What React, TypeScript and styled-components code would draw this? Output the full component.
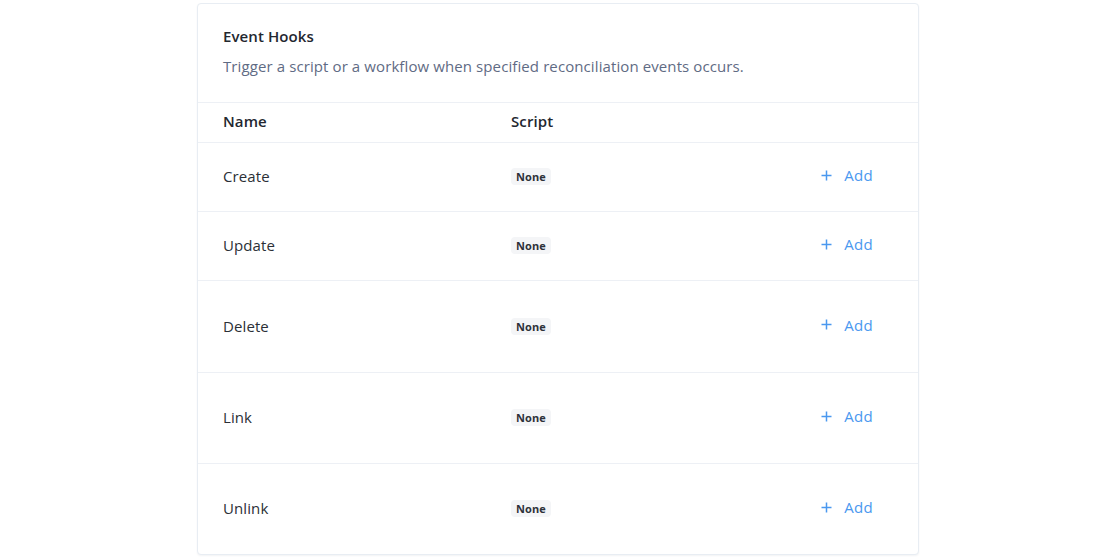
import React from "react";
import styled, { createGlobalStyle } from "styled-components";

const Global = createGlobalStyle`
  html, body { margin: 0; padding: 0; background: #ffffff; }
  body { font-family: "Open Sans", "Noto Sans", sans-serif; -webkit-font-smoothing: antialiased; }
`;

const Page = styled.div`
  width: 1120px;
  height: 560px;
  display: flex;
  justify-content: center;
  padding-top: 3px;
  box-sizing: border-box;
`;

const Card = styled.div`
  width: 722px;
  height: 552px;
  box-sizing: border-box;
  border: 1px solid #e8edf3;
  border-radius: 4px;
  box-shadow: 0 1px 2px rgba(30, 50, 90, 0.06);
  background: #fff;
  display: flex;
  flex-direction: column;
  overflow: hidden;
  margin-left: -4px;
  letter-spacing: 0.1px;
`;

const Header = styled.div`
  height: 99px;
  flex-shrink: 0;
  box-sizing: border-box;
  padding: 22px 25px 0;
  border-bottom: 1px solid #edf0f5;
`;

const Title = styled.div`
  font-size: 15px;
  font-weight: 600;
  color: #23272f;
  line-height: 20px;
`;

const Subtitle = styled.div`
  margin-top: 10px;
  font-size: 15px;
  color: #5f6b84;
  line-height: 20px;
`;

const Row = styled.div<{ $h: number; $head?: boolean }>`
  height: ${(p) => p.$h}px;
  flex-shrink: 0;
  box-sizing: border-box;
  display: grid;
  grid-template-columns: 288px 1fr auto;
  align-items: center;
  padding: ${(p) => (p.$head ? "0 45px 4px 25px" : "0 45px 2px 25px")};
  border-bottom: 1px solid #edf0f5;
  &:last-child { border-bottom: none; }
`;

const HeadCell = styled.div`
  font-size: 15px;
  font-weight: 600;
  color: #23272f;
`;

const NameCell = styled.div`
  font-size: 15px;
  color: #2b2f36;
`;

const Badge = styled.span`
  justify-self: start;
  display: inline-block;
  font-size: 11px;
  font-weight: 700;
  color: #2e323a;
  background: #f4f5f7;
  border-radius: 4px;
  padding: 1px 5px 1px 5px;
  line-height: 15px;
  letter-spacing: 0.1px;
  margin-top: 1px;
`;

const AddButton = styled.button`
  display: flex;
  align-items: center;
  gap: 12px;
  border: none;
  background: none;
  padding: 0;
  font-family: inherit;
  font-size: 15px;
  letter-spacing: 0.3px;
  color: #4a98ef;
  cursor: pointer;
  margin-top: -2px;
`;

const Plus = () => (
  <svg width="11" height="11" viewBox="0 0 11 11">
    <path d="M5.5 0.5v10M0.5 5.5h10" stroke="#4a98ef" strokeWidth="1.5" />
  </svg>
);

const rows: [string, number][] = [
  ["Create", 69],
  ["Update", 69],
  ["Delete", 92],
  ["Link", 91],
  ["Unlink", 90],
];

export default function App() {
  return (
    <>
      <Global />
      <Page>
        <Card>
          <Header>
            <Title>Event Hooks</Title>
            <Subtitle>Trigger a script or a workflow when specified reconciliation events occurs.</Subtitle>
          </Header>
          <Row $h={40} $head>
            <HeadCell>Name</HeadCell>
            <HeadCell>Script</HeadCell>
            <span />
          </Row>
          {rows.map(([name, h]) => (
            <Row key={name} $h={h}>
              <NameCell>{name}</NameCell>
              <Badge>None</Badge>
              <AddButton>
                <Plus />
                Add
              </AddButton>
            </Row>
          ))}
        </Card>
      </Page>
    </>
  );
}
